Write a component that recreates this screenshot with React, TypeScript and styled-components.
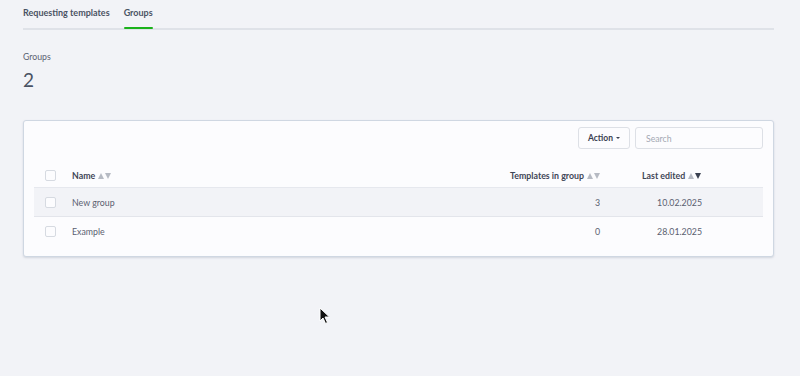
import React from "react";
import styled, { createGlobalStyle } from "styled-components";

const Global = createGlobalStyle`
  html, body { margin: 0; padding: 0; background: #f2f3f7; }
  body { font-family: "Lato", "Open Sans", sans-serif; color: #4a5263; }
  * { box-sizing: border-box; }
`;

const Page = styled.div`
  width: 800px;
  height: 376px;
  padding: 0 26px 0 23px;
  position: relative;
  overflow: hidden;
`;

const Tabs = styled.nav`
  display: flex;
  gap: 14px;
  border-bottom: 2px solid #dfe2e8;
  height: 30px;
`;

const Tab = styled.div<{ $active?: boolean }>`
  font-size: 9px;
  font-weight: 700;
  color: #4a5263;
  padding-top: 7px;
  white-space: nowrap;
  position: relative;
  &::after {
    content: "";
    display: ${(p) => (p.$active ? "block" : "none")};
    position: absolute;
    left: 0;
    right: 0;
    bottom: -1px;
    height: 2px;
    background: #1bb21b;
    border-radius: 1px;
  }
`;

const Stat = styled.div`
  padding-top: 21px;
  display: flex;
  flex-direction: column;
  gap: 6px;
`;

const StatLabel = styled.div`
  font-size: 8.7px;
  color: #5b6272;
`;

const StatValue = styled.div`
  font-size: 19px;
  color: #4a5263;
  font-weight: 400;
`;

const Card = styled.section`
  margin-top: 29px;
  background: #fcfcfe;
  border: 1px solid #cfd7e2;
  border-radius: 3px;
  box-shadow: 0 1px 2px rgba(120, 130, 150, 0.25);
  padding: 6px 10px 10px 10px;
`;

const Toolbar = styled.div`
  display: flex;
  justify-content: flex-end;
  gap: 5px;
`;

const ActionButton = styled.button`
  height: 22px;
  width: 52px;
  border: 1px solid #dde0e6;
  background: #fcfcfe;
  border-radius: 3px;
  font-family: inherit;
  font-size: 8.5px;
  font-weight: 700;
  color: #3a4050;
  display: flex;
  align-items: center;
  justify-content: center;
  gap: 3px;
  padding: 0;
`;

const Caret = styled.span`
  width: 0;
  height: 0;
  border-left: 2.5px solid transparent;
  border-right: 2.5px solid transparent;
  border-top: 2.5px solid #3a4050;
`;

const SearchInput = styled.input`
  width: 128px;
  height: 22px;
  border: 1px solid #dde0e6;
  border-radius: 3px;
  background: #fcfcfe;
  font-family: inherit;
  font-size: 8.7px;
  padding: 0 10px;
  color: #4a5263;
  &::placeholder { color: #a4a9b4; }
`;

const Table = styled.div`
  margin-top: 15px;
  display: grid;
  grid-template-columns: 38px 1fr 110px 102px 61px;
`;

const Row = styled.div<{ $shaded?: boolean; $head?: boolean }>`
  display: contents;
  & > div {
    height: ${(p) => (p.$head ? "24px" : "29px")};
    background: ${(p) => (p.$shaded ? "#f2f3f7" : "transparent")};
    border-bottom: ${(p) => (p.$head ? "1px solid #e6e8ee" : p.$shaded ? "1px solid #e3e5eb" : "none")};
    display: flex;
    align-items: center;
    font-size: 8.8px;
    white-space: nowrap;
  }
`;

const Cell = styled.div<{ $align?: "left" | "right"; $bold?: boolean; $indent?: number }>`
  justify-content: ${(p) => (p.$align === "right" ? "flex-end" : "flex-start")};
  padding-left: ${(p) => p.$indent ?? 0}px;
  font-weight: ${(p) => (p.$bold ? 700 : 400)};
  color: ${(p) => (p.$bold ? "#3f4656" : "#5a6070")};
`;

const CheckCell = styled.div`
  justify-content: center;
  padding-right: 6px;
`;

const Box = styled.span`
  width: 11px;
  height: 11px;
  border: 1px solid #d6dae1;
  border-radius: 2px;
  background: #fcfcfe;
`;

const Sort = styled.span`
  display: inline-flex;
  gap: 1px;
  margin-left: 3px;
  align-items: center;
`;

const Tri = styled.span<{ $down?: boolean; $dark?: boolean }>`
  width: 0;
  height: 0;
  border-left: 3.5px solid transparent;
  border-right: 3.5px solid transparent;
  ${(p) => (p.$down ? "border-top" : "border-bottom")}: 6px solid ${(p) => (p.$dark ? "#3a4050" : "#b6bac3")};
`;

const Cursor = styled.svg`
  position: absolute;
  left: 319px;
  top: 307px;
`;

const SortIcon = ({ active }: { active?: boolean }) => (
  <Sort>
    <Tri />
    <Tri $down $dark={active} />
  </Sort>
);

const rows = [
  { name: "New group", count: 3, date: "10.02.2025" },
  { name: "Example", count: 0, date: "28.01.2025" },
];

export default function App() {
  return (
    <>
      <Global />
      <Page>
        <Tabs>
          <Tab>Requesting templates</Tab>
          <Tab $active>Groups</Tab>
        </Tabs>
        <Stat>
          <StatLabel>Groups</StatLabel>
          <StatValue>2</StatValue>
        </Stat>
        <Card>
          <Toolbar>
            <ActionButton>
              Action <Caret />
            </ActionButton>
            <SearchInput placeholder="Search" />
          </Toolbar>
          <Table>
            <Row $head>
              <CheckCell><Box /></CheckCell>
              <Cell $bold>Name<SortIcon /></Cell>
              <Cell $bold $align="right">Templates in group<SortIcon /></Cell>
              <Cell $bold $indent={42}>Last edited<SortIcon active /></Cell>
              <Cell />
            </Row>
            {rows.map((r, i) => (
              <Row key={r.name} $shaded={i === 0}>
                <CheckCell><Box /></CheckCell>
                <Cell>{r.name}</Cell>
                <Cell $align="right">{r.count}</Cell>
                <Cell $align="right">{r.date}</Cell>
                <Cell />
              </Row>
            ))}
          </Table>
        </Card>
        <Cursor width="12" height="18" viewBox="0 0 12 18">
          <path d="M1 1 L1 14 L4 11 L6.5 16.5 L8.5 15.5 L6 10 L10.5 10 Z" fill="#111" stroke="#fff" strokeWidth="1" />
        </Cursor>
      </Page>
    </>
  );
}
